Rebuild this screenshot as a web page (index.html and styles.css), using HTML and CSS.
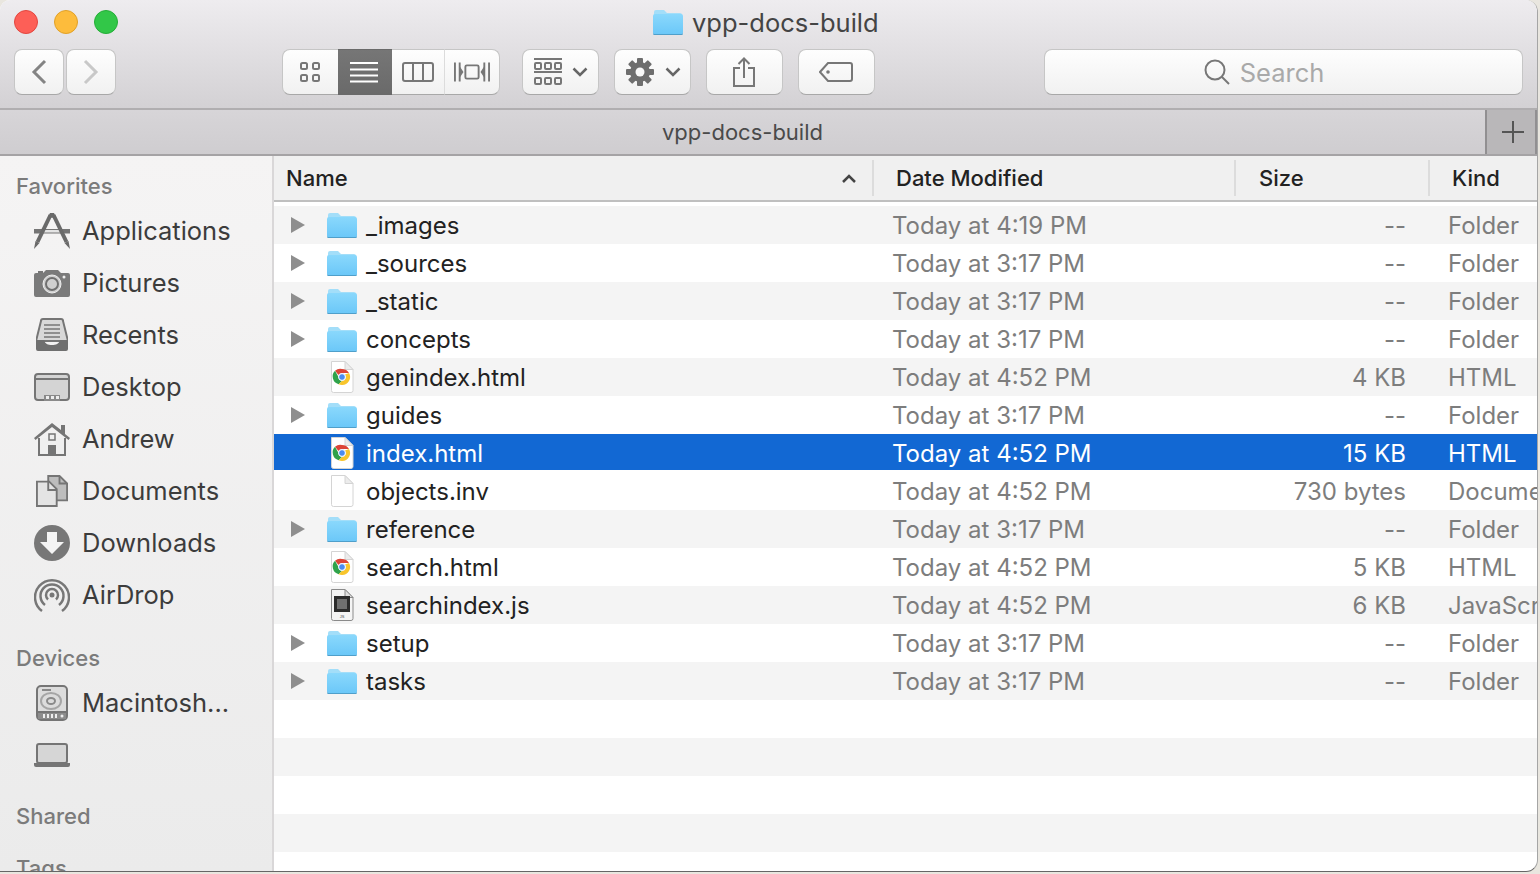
FILE: index.html
```html
<!DOCTYPE html>
<html lang="en">
<head>
<meta charset="utf-8">
<title>vpp-docs-build</title>
<link rel="stylesheet" href="styles.css">
</head>
<body>
<svg class="defs" width="0" height="0" aria-hidden="true">
  <defs>
    <linearGradient id="fg" x1="0" y1="0" x2="0" y2="1">
      <stop offset="0" stop-color="#8ad8fc"/>
      <stop offset="1" stop-color="#6ac7f8"/>
    </linearGradient>
    <symbol id="folder" viewBox="0 0 30 26">
      <path d="M1 5V3a2 2 0 0 1 2-2h8l3 3h13a2 2 0 0 1 2 2v2H1z" fill="#a3def9"/>
      <path d="M0 7a2 2 0 0 1 2-2h26a2 2 0 0 1 2 2v16a3 3 0 0 1-3 3H3a3 3 0 0 1-3-3z" fill="url(#fg)"/>
      <path d="M0 23.500v1a1.500 1.500 0 0 0 1.500 1.500h27a1.500 1.500 0 0 0 1.500-1.500v-1a1.500 1.500 0 0 1-1.500 1.500h-27a1.500 1.500 0 0 1-1.500-1.500z" fill="#4f9fca"/>
    </symbol>
    <symbol id="page" viewBox="0 0 24 32">
      <path d="M1.500 .5H15L23 8.500V29.500a2 2 0 0 1-2 2H3.500a2 2 0 0 1-2-2z" fill="#fff" stroke="#d4d4d4"/>
      <path d="M15 .5V8.500H23z" fill="#ececec" stroke="#d4d4d4" stroke-linejoin="round"/>
    </symbol>
    <symbol id="chrome" viewBox="0 0 24 32">
      <use href="#page"/>
      <path d="M12 8a8 8 0 0 1 7 4h-7a4 4 0 0 0-3.500 2L5 9.800A8 8 0 0 1 12 8z" fill="#dc4437"/>
      <path d="M5 9.800 8.500 16a4 4 0 0 0 3.500 4L8.600 23.200A8 8 0 0 1 5 9.800z" fill="#2fa24a"/>
      <path d="M19 12a8 8 0 0 1-7 12 8 8 0 0 1-3.400-.8L12 20a4 4 0 0 0 3-6.500z" fill="#f8c52c"/>
      <circle cx="12" cy="16" r="3.400" fill="#4b8bf0" stroke="#fff" stroke-width="1"/>
    </symbol>
    <symbol id="jsfile" viewBox="0 0 24 32">
      <path d="M1.500 .5H15L23 8.500V29.500a2 2 0 0 1-2 2H3.500a2 2 0 0 1-2-2z" fill="#f4f4f4" stroke="#8a8a8a"/>
      <path d="M15 .5V8.500H23z" fill="#e0e0e0" stroke="#8a8a8a" stroke-linejoin="round"/>
      <rect x="4" y="7" width="16" height="16" fill="#2c2c2c"/>
      <rect x="7" y="10" width="10" height="10" fill="#707070"/>
      <text class="jslabel" x="12" y="29" text-anchor="middle">JS</text>
    </symbol>
  </defs>
</svg>

<div class="window">
  <header class="chrome">
    <div class="title-row">
      <div class="lights">
        <span class="light red"></span>
        <span class="light amber"></span>
        <span class="light green"></span>
      </div>
      <div class="title">
        <svg class="title-icon"><use href="#folder"/></svg>
        <span>vpp-docs-build</span>
      </div>
    </div>
    <div class="toolbar">
      <div class="nav">
        <button class="btn nav-btn" aria-label="Back"><svg width="16" height="26" viewBox="0 0 16 26"><path d="M14 2 3 13l11 11" class="st dark"/></svg></button>
        <button class="btn nav-btn" aria-label="Forward"><svg width="16" height="26" viewBox="0 0 16 26"><path d="M2 2l11 11L2 24" class="st faint"/></svg></button>
      </div>
      <div class="segment">
        <button class="seg seg-a" aria-label="Icons"><svg width="22" height="22" viewBox="0 0 22 22"><g class="st thin"><rect x="2" y="2" width="6" height="6" rx="1.500"/><rect x="14" y="2" width="6" height="6" rx="1.500"/><rect x="2" y="14" width="6" height="6" rx="1.500"/><rect x="14" y="14" width="6" height="6" rx="1.500"/></g></svg></button>
        <button class="seg seg-b active" aria-label="List"><svg width="28" height="22" viewBox="0 0 28 22"><path d="M0 2h28M0 8.500h28M0 14.500h28M0 20.500h28" stroke="#fff" stroke-width="2" fill="none"/></svg></button>
        <button class="seg seg-c" aria-label="Columns"><svg width="32" height="20" viewBox="0 0 32 20"><g class="st thin"><rect x="1" y="1" width="30" height="18" rx="2"/><path d="M11 1v18M21 1v18"/></g></svg></button>
        <button class="seg seg-d" aria-label="Cover flow"><svg width="36" height="22" viewBox="0 0 38 22"><g class="st thin"><path d="M1 1v20M6 1v20M32 1v20M37 1v20"/><rect x="12" y="4" width="14" height="14" rx="1.500"/></g><path d="M6 5l4 6-4 6zM32 5l-4 6 4 6z" fill="#777"/></svg></button>
      </div>
      <button class="btn tool-btn arrange" aria-label="Arrange">
        <svg width="30" height="28" viewBox="0 0 30 28"><path d="M1 1h28M1 14h28" stroke="#777" stroke-width="2"/><g class="st thin"><rect x="2" y="5" width="6" height="6" rx="1"/><rect x="12" y="5" width="6" height="6" rx="1"/><rect x="22" y="5" width="6" height="6" rx="1"/><rect x="2" y="20" width="6" height="6" rx="1"/><rect x="12" y="20" width="6" height="6" rx="1"/><rect x="22" y="20" width="6" height="6" rx="1"/></g></svg>
        <svg width="16" height="10" viewBox="0 0 16 10"><path d="M1.500 1.500 8 8l6.500-6.500" class="st chev"/></svg>
      </button>
      <button class="btn tool-btn action" aria-label="Action">
        <svg width="28" height="28" viewBox="0 0 28 28"><g fill="#6e6e6e"><circle cx="14" cy="14" r="10"/><rect x="11" y="0" width="6" height="28" rx="1"/><rect x="11" y="0" width="6" height="28" rx="1" transform="rotate(45 14 14)"/><rect x="11" y="0" width="6" height="28" rx="1" transform="rotate(90 14 14)"/><rect x="11" y="0" width="6" height="28" rx="1" transform="rotate(135 14 14)"/></g><circle cx="14" cy="14" r="4.500" fill="#f8f8f8"/></svg>
        <svg width="16" height="10" viewBox="0 0 16 10"><path d="M1.500 1.500 8 8l6.500-6.500" class="st chev"/></svg>
      </button>
      <button class="btn tool-btn share" aria-label="Share"><svg width="22" height="30" viewBox="0 0 22 30"><g class="st thin"><path d="M7 11H1v18h20V11h-6"/><path d="M11 21V1.500M5.500 7 11 1.500 16.500 7"/></g></svg></button>
      <button class="btn tool-btn tag" aria-label="Tags"><svg width="34" height="20" viewBox="0 0 34 20"><path d="M9 1h22a2 2 0 0 1 2 2v14a2 2 0 0 1-2 2H9L1 10z" class="st thin"/><circle cx="9" cy="10" r="1.800" fill="#777"/></svg></button>
      <div class="search">
        <svg width="26" height="26" viewBox="0 0 26 26"><circle cx="11" cy="11" r="9.500" class="st thin"/><path d="M18 18l7 7" class="st thin"/></svg>
        <span>Search</span>
      </div>
    </div>
  </header>

  <div class="tabbar">
    <div class="tab-title">vpp-docs-build</div>
    <div class="tab-add"><svg width="22" height="22" viewBox="0 0 22 22"><path d="M11 0v22M0 11h22" stroke="#555" stroke-width="2"/></svg></div>
  </div>

  <div class="body">
    <aside class="sidebar">
      <div class="side-head first">Favorites</div>
      <div class="side-item"><svg class="side-icon" viewBox="0 0 36 36"><path d="M0 16h36v4.500H0z" fill="#757575"/><path d="M11 17h14l1.500 2.500h-17z" fill="#e4e4e4"/><path d="M16.500 2 3.500 29" stroke="#6a6a6a" stroke-width="4" fill="none"/><path d="M19.500 2 32.500 29" stroke="#6a6a6a" stroke-width="4" fill="none"/><path d="M16 0h4l1.500 3-3.500 2-3.500-2zM1.500 28l4 2L0 36zM34.500 28l-4 2L36 36z" fill="#6a6a6a"/></svg><span>Applications</span></div>
      <div class="side-item"><svg class="side-icon" viewBox="0 0 36 28"><path d="M4 2h5v2H4z" fill="#777"/><path d="M2 4h7l3-3h12l3 3h7a2 2 0 0 1 2 2v20a2 2 0 0 1-2 2H2a2 2 0 0 1-2-2V6a2 2 0 0 1 2-2z" fill="#7a7a7a"/><circle cx="18" cy="15" r="9" fill="#cfcfcf" stroke="#eee" stroke-width="1"/><circle cx="18" cy="15" r="6" fill="none" stroke="#6f6f6f" stroke-width="2"/><circle cx="30" cy="8" r="1.500" fill="#eee"/></svg><span>Pictures</span></div>
      <div class="side-item"><svg class="side-icon narrow" viewBox="0 0 32 32"><path d="M5 2a2 2 0 0 1 2-2h18a2 2 0 0 1 2 2l5 20H0z" fill="#d8d8d8" stroke="#757575" stroke-width="2"/><path d="M8 6h16M8 10h16M8 14h16M8 18h16" stroke="#757575" stroke-width="1.500"/><path d="M0 21h8c1 4 4 5 8 5s7-1 8-5h8v9a2 2 0 0 1-2 2H2a2 2 0 0 1-2-2z" fill="#6f6f6f"/></svg><span>Recents</span></div>
      <div class="side-item"><svg class="side-icon" viewBox="0 0 36 28"><rect x="1" y="1" width="34" height="26" rx="3" fill="#d4d4d4" stroke="#757575" stroke-width="2"/><path d="M2 6h32" stroke="#757575" stroke-width="2"/><path d="M10 28v-6h16v6z" fill="#8a8a8a"/><path d="M12 23h3v3h-3zM17 23h3v3h-3zM22 23h3v3h-3z" fill="#eee"/></svg><span>Desktop</span></div>
      <div class="side-item"><svg class="side-icon" viewBox="0 0 36 34"><path d="M5 16v17h26V16" fill="#efefef" stroke="#757575" stroke-width="2"/><path d="M0 16 18 1l9 7V3h4v9l5 4-1.500 2L18 5 1.500 18z" fill="#757575"/><rect x="15" y="12" width="6" height="6" fill="#efefef" stroke="#757575" stroke-width="1.500"/><rect x="14" y="23" width="8" height="10" fill="#757575"/></svg><span>Andrew</span></div>
      <div class="side-item"><svg class="side-icon narrow" viewBox="0 0 34 34"><path d="M13 1h12l8 8v18H13z" fill="#bdbdbd" stroke="#757575" stroke-width="2"/><path d="M1 7h13l8 8v18H1z" fill="#e4e4e4" stroke="#757575" stroke-width="2"/><path d="M13 7v9h9" fill="none" stroke="#757575" stroke-width="2"/><path d="M25 1v8h8" fill="none" stroke="#757575" stroke-width="2"/></svg><span>Documents</span></div>
      <div class="side-item"><svg class="side-icon" viewBox="0 0 36 36"><circle cx="18" cy="18" r="18" fill="#777"/><path d="M13 7h10v10h7L18 29 6 17h7z" fill="#f4f4f4"/></svg><span>Downloads</span></div>
      <div class="side-item"><svg class="side-icon" viewBox="0 0 36 36"><g fill="none" stroke="#777" stroke-width="2.500"><path d="M8 34A17 17 0 1 1 28 34"/><path d="M11 28a11.500 11.500 0 1 1 14 0"/><path d="M14 22.500a6 6 0 1 1 8 0"/></g><circle cx="18" cy="18" r="2.500" fill="#777"/></svg><span>AirDrop</span></div>

      <div class="side-head devices">Devices</div>
      <div class="side-item"><svg class="side-icon narrow" viewBox="0 0 32 36"><rect x="1" y="1" width="30" height="34" rx="4" fill="#dcdcdc" stroke="#757575" stroke-width="2"/><path d="M1 27h30" stroke="#757575" stroke-width="2"/><path d="M2 28h28v6H2z" fill="#8c8c8c"/><path d="M7 29h2v4H7zM11 29h2v4h-2zM15 29h2v4h-2zM19 29h2v4h-2z" fill="#eee"/><circle cx="26" cy="31" r="1.500" fill="#eee"/><path d="M6 5h9" stroke="#8a8a8a" stroke-width="2"/><ellipse cx="15" cy="16" rx="10" ry="8" fill="none" stroke="#a5a5a5" stroke-width="2"/><ellipse cx="15" cy="16" rx="4" ry="3" fill="none" stroke="#8a8a8a" stroke-width="2"/></svg><span>Macintosh...</span></div>
      <div class="side-item"><svg class="side-icon laptop" viewBox="0 0 36 24"><rect x="3" y="1" width="30" height="19" rx="2" fill="#d6d6d6" stroke="#757575" stroke-width="2"/><path d="M0 20h36v2a2 2 0 0 1-2 2H2a2 2 0 0 1-2-2z" fill="#757575"/></svg></div>

      <div class="side-head shared">Shared</div>
      <div class="side-head tags">Tags</div>
    </aside>

    <main class="list">
      <div class="cols cols-head">
        <div class="th th-name"><span>Name</span><svg width="14" height="9" viewBox="0 0 14 9"><path d="M1 8l6-6 6 6" class="st sort"/></svg></div>
        <div class="th">Date Modified</div>
        <div class="th th-size">Size</div>
        <div class="th">Kind</div>
      </div>
      <div class="rows">
        <div class="cols row"><div class="name"><i class="tri"></i><svg class="ic-folder"><use href="#folder"/></svg><span>_images</span></div><div class="date">Today at 4:19 PM</div><div class="size">--</div><div class="kind">Folder</div></div>
        <div class="cols row"><div class="name"><i class="tri"></i><svg class="ic-folder"><use href="#folder"/></svg><span>_sources</span></div><div class="date">Today at 3:17 PM</div><div class="size">--</div><div class="kind">Folder</div></div>
        <div class="cols row"><div class="name"><i class="tri"></i><svg class="ic-folder"><use href="#folder"/></svg><span>_static</span></div><div class="date">Today at 3:17 PM</div><div class="size">--</div><div class="kind">Folder</div></div>
        <div class="cols row"><div class="name"><i class="tri"></i><svg class="ic-folder"><use href="#folder"/></svg><span>concepts</span></div><div class="date">Today at 3:17 PM</div><div class="size">--</div><div class="kind">Folder</div></div>
        <div class="cols row"><div class="name"><i class="tri none"></i><svg class="ic-file"><use href="#chrome"/></svg><span>genindex.html</span></div><div class="date">Today at 4:52 PM</div><div class="size">4 KB</div><div class="kind">HTML</div></div>
        <div class="cols row"><div class="name"><i class="tri"></i><svg class="ic-folder"><use href="#folder"/></svg><span>guides</span></div><div class="date">Today at 3:17 PM</div><div class="size">--</div><div class="kind">Folder</div></div>
        <div class="cols row selected"><div class="name"><i class="tri none"></i><svg class="ic-file"><use href="#chrome"/></svg><span>index.html</span></div><div class="date">Today at 4:52 PM</div><div class="size">15 KB</div><div class="kind">HTML</div></div>
        <div class="cols row"><div class="name"><i class="tri none"></i><svg class="ic-file"><use href="#page"/></svg><span>objects.inv</span></div><div class="date">Today at 4:52 PM</div><div class="size">730 bytes</div><div class="kind">Document</div></div>
        <div class="cols row"><div class="name"><i class="tri"></i><svg class="ic-folder"><use href="#folder"/></svg><span>reference</span></div><div class="date">Today at 3:17 PM</div><div class="size">--</div><div class="kind">Folder</div></div>
        <div class="cols row"><div class="name"><i class="tri none"></i><svg class="ic-file"><use href="#chrome"/></svg><span>search.html</span></div><div class="date">Today at 4:52 PM</div><div class="size">5 KB</div><div class="kind">HTML</div></div>
        <div class="cols row"><div class="name"><i class="tri none"></i><svg class="ic-file"><use href="#jsfile"/></svg><span>searchindex.js</span></div><div class="date">Today at 4:52 PM</div><div class="size">6 KB</div><div class="kind">JavaScript</div></div>
        <div class="cols row"><div class="name"><i class="tri"></i><svg class="ic-folder"><use href="#folder"/></svg><span>setup</span></div><div class="date">Today at 3:17 PM</div><div class="size">--</div><div class="kind">Folder</div></div>
        <div class="cols row"><div class="name"><i class="tri"></i><svg class="ic-folder"><use href="#folder"/></svg><span>tasks</span></div><div class="date">Today at 3:17 PM</div><div class="size">--</div><div class="kind">Folder</div></div>
        <div class="row"></div>
        <div class="row"></div>
        <div class="row"></div>
        <div class="row"></div>
        <div class="row"></div>
      </div>
    </main>
  </div>
</div>
</body>
</html>
```

FILE: styles.css
```css
* { box-sizing: border-box; }
html, body { margin: 0; height: 100%; overflow: hidden; }
body {
  background: #e9e6df;
  font-family: Inter, "Liberation Sans", sans-serif;
  color: #222;
}
.defs { position: absolute; }
.jslabel { font-size: 4px; font-family: "Liberation Sans", sans-serif; fill: #444; }

.window {
  width: 1538px;
  height: 872px;
  display: flex;
  flex-direction: column;
  overflow: hidden;
  background: #fff;
  border-right: 1px solid #a5a5a5;
  border-bottom: 1px solid #666;
  border-radius: 10px 12px 12px 0;
}

.chrome {
  height: 110px;
  flex: none;
  background: linear-gradient(#eeecef, #d3d1d4);
  border-bottom: 2px solid #b0aeb0;
}
.title-row { height: 44px; padding-left: 14px; display: flex; align-items: center; }
.lights { display: flex; gap: 16px; }
.light { width: 24px; height: 24px; border-radius: 50%; border: 1px solid; }
.red { background: #fd5f57; border-color: #e2463f; }
.amber { background: #fdbc3c; border-color: #e0a028; }
.green { background: #32c748; border-color: #25ad38; }
.title {
  margin-left: 535px;
  display: flex;
  align-items: center;
  gap: 9px;
  font-size: 25.500px;
  color: #444;
}
.title-icon { width: 30px; height: 26px; }

.toolbar { display: flex; align-items: flex-start; padding: 5px 0 0 14px; }
.btn, .seg, .search {
  background: linear-gradient(#fefefe, #f1f1f1);
  border: 1px solid #c6c6c6;
  border-bottom-color: #a8a8a8;
  padding: 0;
  display: flex;
  align-items: center;
  justify-content: center;
}
.btn { height: 46px; border-radius: 8px; }
.nav { display: flex; gap: 2px; margin-right: 166px; }
.nav-btn { width: 50px; }
.segment { display: flex; margin-right: 22px; }
.seg { height: 46px; border-left: 0; border-right: 0; padding-right: 2px; }
.seg-a { width: 56px; border-left: 1px solid #c6c6c6; border-radius: 8px 0 0 8px; }
.seg-b { width: 54px; }
.seg-c { width: 53px; border-right: 1px solid #dcdcdc; padding-right: 0; }
.seg-d { width: 55px; border-right: 1px solid #c6c6c6; border-radius: 0 8px 8px 0; padding-right: 0; }
.active { background: linear-gradient(#767676, #6a6a6a); border-color: #6a6a6a; }
.tool-btn { width: 77px; margin-right: 15px; gap: 10px; }
.arrange { gap: 9px; }
.action { padding-left: 2px; gap: 11px; }
.share { padding-right: 2px; }
.tag { margin-right: 169px; padding-right: 2px; }
.search {
  width: 479px;
  height: 46px;
  border-radius: 8px;
  gap: 10px;
  padding-right: 39px;
  font-size: 25.500px;
  color: #a9a9a9;
}

.st { fill: none; stroke: #777; stroke-linecap: butt; }
.dark { stroke: #848484; stroke-width: 3; }
.faint { stroke: #c8c8c8; stroke-width: 3; }
.thin { stroke-width: 2; fill: none; stroke: #777; }
.chev { stroke: #666; stroke-width: 2.500; }
.sort { stroke: #444; stroke-width: 2.500; }

.tabbar {
  height: 46px;
  flex: none;
  display: flex;
  background: linear-gradient(#d7d5d8, #cfcdd0);
  border-bottom: 2px solid #a5a3a5;
}
.tab-title { flex: 1; text-align: center; line-height: 44px; font-size: 22px; color: #4a4a4a; }
.tab-add {
  width: 52px;
  padding-left: 4px;
  background: #b9b7b9;
  border-left: 2px solid #918f91;
  border-right: 2px solid #918f91;
  display: flex;
  align-items: center;
  justify-content: center;
}

.body { flex: 1; min-height: 0; display: flex; }

.sidebar {
  width: 274px;
  flex: none;
  overflow: hidden;
  background: linear-gradient(#f5f4f4, #ebebeb);
  border-right: 2px solid #d9d7d8;
}
.side-head {
  height: 38px;
  line-height: 38px;
  padding-left: 16px;
  font-size: 22px;
  font-weight: 500;
  color: #7b7b7b;
}
.first { margin-top: 11px; }
.devices { margin-top: 18px; }
.shared { margin-top: 16px; }
.tags { margin-top: 14px; }
.side-item {
  height: 52px;
  display: flex;
  align-items: center;
  padding-left: 34px;
  gap: 12px;
  font-size: 25.500px;
  color: #3c3c3c;
}
.side-item span { margin-top: -2px; }
.side-icon { width: 36px; height: 36px; flex: none; }
.side-icon.narrow { width: 32px; margin: 0 2px; }

.list { flex: 1; min-width: 0; overflow: hidden; }
.cols { display: grid; grid-template-columns: 598px 362px 194px 110px; }
.cols-head {
  height: 46px;
  background: #f0f0f0;
  border-bottom: 2px solid #bfbfbf;
  align-items: center;
  font-size: 22px;
  font-weight: 500;
  color: #222;
  margin-bottom: 4px;
}
.th { height: 36px; line-height: 36px; padding-left: 22px; border-left: 2px solid #dcdcdc; }
.th-size { padding-left: 23px; }
.th-name {
  border-left: 0;
  padding: 0 16px 0 12px;
  display: flex;
  align-items: center;
  justify-content: space-between;
}
.row { height: 38px; font-size: 24px; align-items: center; }
.row:nth-child(odd) { background: #f4f4f4; }
.row > div { white-space: nowrap; overflow: hidden; }
.name { display: flex; align-items: center; padding-left: 17px; height: 38px; }
.tri {
  width: 0; height: 0; flex: none;
  border-left: 14px solid #8e8e8e;
  border-top: 8px solid transparent;
  border-bottom: 8px solid transparent;
  margin-right: 22px;
}
.tri.none { visibility: hidden; }
.ic-folder { width: 30px; height: 26px; margin-right: 9px; flex: none; }
.ic-file { width: 24px; height: 32px; margin: 0 12px 0 3px; flex: none; }
.date { padding-left: 20px; color: #7d7d7d; }
.size { text-align: right; padding-right: 22px; color: #7d7d7d; }
.kind { padding-left: 20px; color: #7d7d7d; }
.row.selected {
  background: #fff;
  color: #fff;
  box-shadow: inset 0 36px 0 #1268d3;
}
.selected .date, .selected .size, .selected .kind { color: #fff; }
```
